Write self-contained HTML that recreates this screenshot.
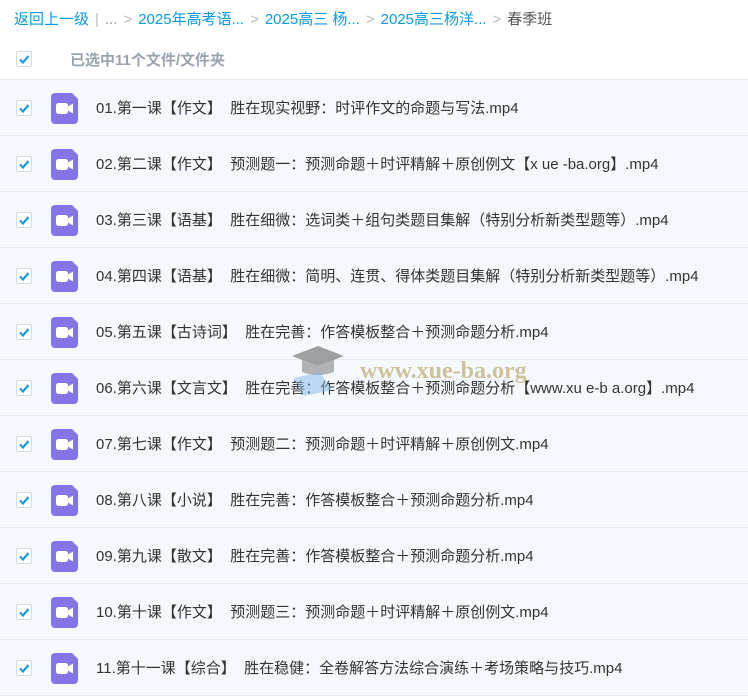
<!DOCTYPE html>
<html><head><meta charset="utf-8"><style>
*{margin:0;padding:0;box-sizing:border-box}
body{width:748px;height:698px;overflow:hidden;background:#fff;font-family:"Liberation Sans","Noto Sans CJK SC",sans-serif;position:relative}
.crumb{position:absolute;top:8px;left:14px;font-size:15px;color:#0a9ae0;white-space:nowrap}
.crumb .g{color:#bbb;margin:0 6px}
.crumb .last{color:#555}
.cb{position:absolute;left:16px;width:16px;height:16px;border:1px solid #d5dbe2;border-radius:2px;background:#fff}
.cb svg{position:absolute;left:1px;top:1px}
.sel{position:absolute;top:40px;left:0;width:748px;height:40px;border-bottom:1px solid #e3ebf3}
.sel span{position:absolute;left:70px;top:9px;font-size:15px;font-weight:bold;color:#9aa3b0}
.row{position:absolute;left:0;width:748px;height:56px;background:#f5f9fd;border-bottom:1px solid #e3ebf3}
.row .ic{position:absolute;left:51px;top:13px;width:27px;height:31px}
.row .t{position:absolute;left:96px;top:17px;font-size:15px;color:#333;white-space:nowrap}
.wm{position:absolute;left:290px;top:338px;}
</style></head><body>
<div class="crumb">返回上一级<span class="g">|</span><span style="color:#999">...</span><span class="g">&gt;</span>2025年高考语...<span class="g">&gt;</span>2025高三 杨...<span class="g">&gt;</span>2025高三杨洋...<span class="g">&gt;</span><span class="last">春季班</span></div>
<div class="sel"><div class="cb" style="top:11px"><svg width="12" height="12" viewBox="0 0 12 12"><path d="M2 6.5L5 9.5L10.5 3" stroke="#1a9be6" stroke-width="2.2" fill="none"/></svg></div><span>已选中11个文件/文件夹</span></div>
<div id="rows"></div>
<script>
var t=["01.第一课【作文】 胜在现实视野：时评作文的命题与写法.mp4","02.第二课【作文】 预测题一：预测命题＋时评精解＋原创例文【x ue -ba.org】.mp4","03.第三课【语基】 胜在细微：选词类＋组句类题目集解（特别分析新类型题等）.mp4","04.第四课【语基】 胜在细微：简明、连贯、得体类题目集解（特别分析新类型题等）.mp4","05.第五课【古诗词】 胜在完善：作答模板整合＋预测命题分析.mp4","06.第六课【文言文】 胜在完善：作答模板整合＋预测命题分析【www.xu e-b a.org】.mp4","07.第七课【作文】 预测题二：预测命题＋时评精解＋原创例文.mp4","08.第八课【小说】 胜在完善：作答模板整合＋预测命题分析.mp4","09.第九课【散文】 胜在完善：作答模板整合＋预测命题分析.mp4","10.第十课【作文】 预测题三：预测命题＋时评精解＋原创例文.mp4","11.第十一课【综合】 胜在稳健：全卷解答方法综合演练＋考场策略与技巧.mp4"];
var h="";
for(var i=0;i<11;i++){var y=80+i*56;
h+='<div class="row" style="top:'+y+'px"><div class="cb" style="top:20px"><svg width="12" height="12" viewBox="0 0 12 12"><path d="M2 6.5L5 9.5L10.5 3" stroke="#1a9be6" stroke-width="2.2" fill="none"/></svg></div><svg class="ic" viewBox="0 0 27 31"><path d="M4 0H21L27 6V27a4 4 0 0 1-4 4H4a4 4 0 0 1-4-4V4a4 4 0 0 1 4-4z" fill="#8474e6"/><rect x="5" y="10" width="12" height="11" rx="2.5" fill="#fff"/><path d="M16 14L22 10.5V20.5L16 17z" fill="#fff"/></svg><div class="t">'+t[i].replace(/】 /,"】&nbsp;&nbsp;")+'</div></div>';}
document.getElementById("rows").innerHTML=h;
</script>
<div class="wm"><svg width="250" height="60" viewBox="0 0 250 60"><path d="M2 18L28 8L54 18L28 28z" fill="#888" opacity=".8"/><path d="M12 22V34Q28 40 44 34V22L28 28z" fill="#999" opacity=".75"/><path d="M4 40L30 34L42 52L14 58z" fill="#7fb8e8" opacity=".5"/><text x="70" y="40" font-family="Liberation Serif,serif" font-weight="bold" font-size="24" fill="#c8b98a" opacity=".85">www.xue-ba.org</text></svg></div>
</body></html>
